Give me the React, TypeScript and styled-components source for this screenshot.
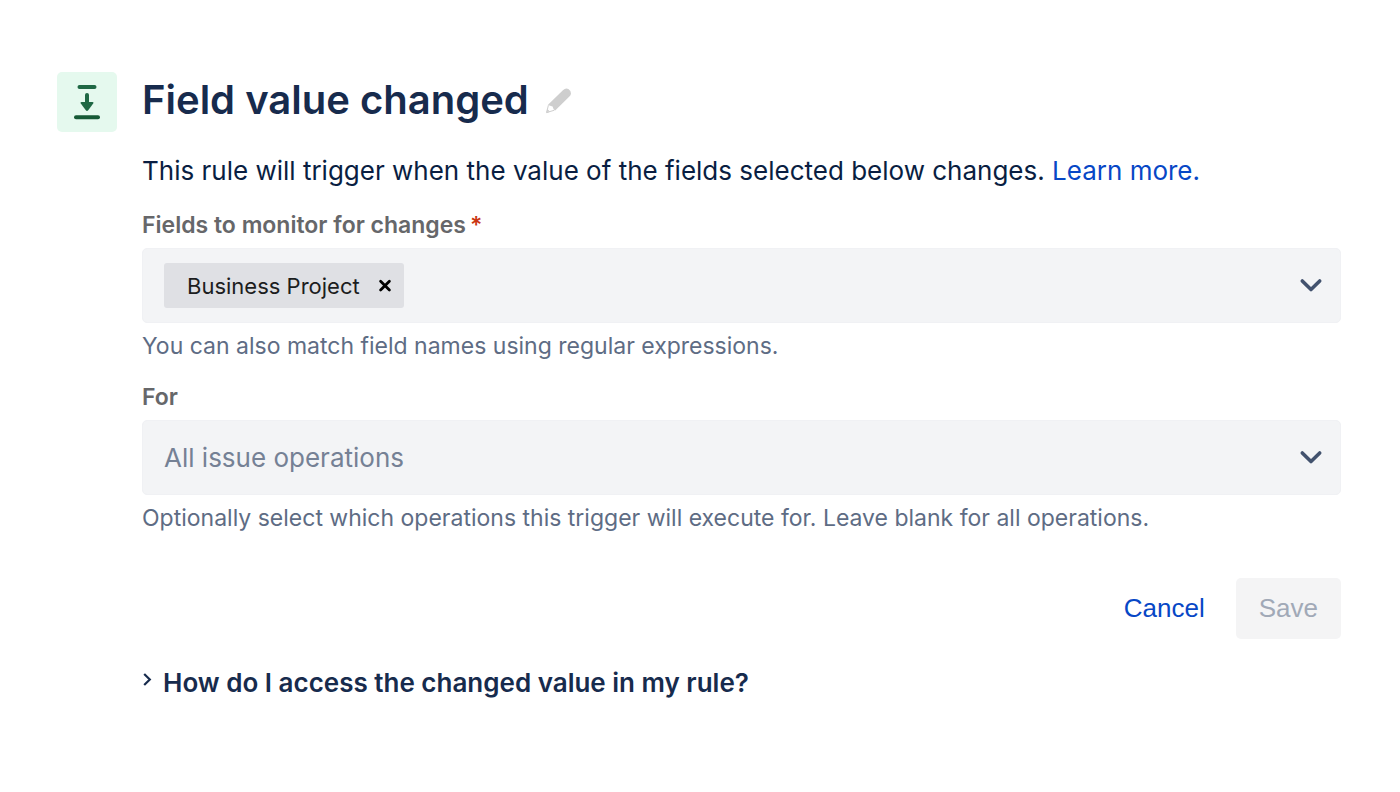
import React, { useState } from "react";
import styled, { createGlobalStyle } from "styled-components";

const GlobalStyle = createGlobalStyle`
  *, *::before, *::after { box-sizing: border-box; }
  body {
    margin: 0;
    background: #ffffff;
    color: #172b4d;
    font-family: Inter, "Liberation Sans", sans-serif;
  }
  button, input, select { font: inherit; }
`;

const Page = styled.main`
  display: flex;
  align-items: flex-start;
  gap: 25px;
  padding: 72px 59px 72px 57px;
`;

const TriggerBadge = styled.div`
  display: flex;
  flex: none;
  width: 60px;
  height: 60px;
  border-radius: 5px;
  background: #e5f9ee;
`;

const Content = styled.div`
  flex: 1;
  min-width: 0;
`;

const Header = styled.header`
  display: flex;
  align-items: center;
  gap: 15px;
  margin-bottom: 27px;
`;

const Title = styled.h1`
  margin: 0;
  font-size: 40px;
  line-height: 56px;
  font-weight: 600;
`;

const IconButton = styled.button`
  display: flex;
  align-items: center;
  justify-content: center;
  padding: 0;
  border: 0;
  background: none;
  cursor: pointer;
`;

const Intro = styled.p`
  margin: 0 0 24px;
  color: #091e42;
  font-size: 26px;
  line-height: 32px;
`;

const Link = styled.a`
  color: #0747c6;
  text-decoration: none;
`;

const Form = styled.form`
  display: flex;
  flex-direction: column;
  gap: 23px;
`;

const Field = styled.div`
  display: flex;
  flex-direction: column;
  gap: 9px;
`;

const Label = styled.label`
  color: #66676a;
  font-size: 23px;
  line-height: 28px;
  font-weight: 600;
`;

const Required = styled.span`
  margin-left: 4px;
  color: #ca3511;
`;

const Control = styled.div`
  display: flex;
  align-items: center;
  height: 75px;
  padding: 0 16px 0 21px;
  border: 1px solid #f0f1f4;
  border-radius: 5px;
  background: #f3f4f6;
`;

const Tag = styled.span`
  display: flex;
  flex: none;
  align-items: center;
  gap: 18px;
  height: 45px;
  padding: 0 12px 0 23px;
  border-radius: 3px;
  background: #dfe0e4;
  color: #1c1d20;
  font-size: 22px;
  line-height: 28px;
`;

const FieldInput = styled.input`
  flex: 1;
  min-width: 0;
  height: 45px;
  border: 0;
  outline: 0;
  background: none;
  font-size: 22px;
`;

const SelectControl = styled.div`
  display: grid;
  align-items: center;
  grid-template-columns: 1fr auto;
  height: 75px;
  padding-right: 16px;
  border: 1px solid #f0f1f4;
  border-radius: 5px;
  background: #f3f4f6;
`;

const Select = styled.select`
  grid-area: 1 / 1 / 2 / 3;
  width: 100%;
  height: 73px;
  padding: 0 0 0 21px;
  border: 0;
  outline: 0;
  appearance: none;
  background: none;
  color: #758195;
  font-size: 26px;
`;

const ArrowSlot = styled.span`
  display: flex;
  grid-area: 1 / 2 / 2 / 3;
  pointer-events: none;
`;

const Help = styled.p`
  margin: 0;
  color: #5e6c84;
  font-size: 23px;
  line-height: 28px;
`;

const Actions = styled.div`
  display: flex;
  justify-content: flex-end;
  gap: 8px;
  margin-top: 23px;
`;

const Button = styled.button<{ $filled?: boolean }>`
  height: 61px;
  padding: 0 23px;
  border: 0;
  border-radius: 5px;
  background: ${(p) => (p.$filled ? "#f4f4f5" : "transparent")};
  color: ${(p) => (p.$filled ? "#a1a9b7" : "#0747c6")};
  font-family: "Liberation Sans", Arial, sans-serif;
  font-size: 26px;
`;

const Faq = styled.details`
  margin-top: 28px;
`;

const Question = styled.summary`
  display: flex;
  align-items: center;
  gap: 10px;
  list-style: none;
  font-size: 26px;
  line-height: 32px;
  font-weight: 600;
  cursor: pointer;
`;

const Answer = styled.p`
  margin: 12px 0 0 20px;
  font-size: 23px;
  line-height: 28px;
`;

const TriggerIcon = () => (
  <svg width="60" height="60" viewBox="0 0 60 60" aria-hidden="true">
    <g fill="none" stroke="#1f6844" strokeLinecap="round" strokeWidth="4">
      <path d="M22.5 15H37.5" />
      <path d="M19 45.3H41" stroke="#165a36" />
      <path d="M30 23V31" />
    </g>
    <path d="M24.5 30H35.5Q37.3 30 36.2 31.5L31.2 38.2Q30 39.6 28.8 38.2L23.8 31.5Q22.7 30 24.5 30Z" fill="#1f6844" />
  </svg>
);

const PencilIcon = () => (
  <svg width="28" height="30" viewBox="0 0 28 30" aria-hidden="true">
    <path
      d="M4 19.8L18.9 5.2Q21.6 2.4 24.4 3.9Q27.1 5.7 27 8.4Q26.8 10.2 25.4 11.6L11.2 25.5L9.6 24.2L8.6 21.6L5.4 20.6Z"
      fill="#cecece"
    />
    <path d="M4.4 20.2L2.6 27.6L10.4 25.2M2.8 27.4L3.6 24.8L5.4 26.6Z" fill="none" stroke="#cecece" />
  </svg>
);

const ChevronDown = () => (
  <svg width="26" height="26" viewBox="0 0 26 26" aria-hidden="true">
    <path
      d="M4.3 8L13 16.5L21.7 8"
      fill="none"
      stroke="#42526e"
      strokeWidth="3.6"
      strokeLinecap="round"
      strokeLinejoin="round"
    />
  </svg>
);

const CloseIcon = () => (
  <svg width="14" height="14" viewBox="0 0 14 14" aria-hidden="true">
    <path d="M2.6 2.2L11.4 11M11.4 2.2L2.6 11" stroke="#000" strokeWidth="2.8" strokeLinecap="round" />
  </svg>
);

const ChevronRight = () => (
  <svg width="11" height="22" viewBox="0 0 11 22" aria-hidden="true">
    <path d="M2.2 2L7.8 7.5L2.2 13" fill="none" stroke="#172b4d" strokeWidth="2.2" />
  </svg>
);

export default function App() {
  const [fields, setFields] = useState(["Business Project"]);

  return (
    <Page>
      <GlobalStyle />
      <TriggerBadge>
        <TriggerIcon />
      </TriggerBadge>
      <Content>
        <Header>
          <Title>Field value changed</Title>
          <IconButton type="button" aria-label="Rename">
            <PencilIcon />
          </IconButton>
        </Header>
        <Intro>
          This rule will trigger when the value of the fields selected below changes.{" "}
          <Link href="#learn">Learn more.</Link>
        </Intro>
        <Form onSubmit={(e) => e.preventDefault()}>
          <Field>
            <Label htmlFor="fields">
              Fields to monitor for changes<Required>*</Required>
            </Label>
            <Control>
              {fields.map((name) => (
                <Tag key={name}>
                  {name}
                  <IconButton
                    type="button"
                    aria-label={`Remove ${name}`}
                    onClick={() => setFields(fields.filter((f) => f !== name))}
                  >
                    <CloseIcon />
                  </IconButton>
                </Tag>
              ))}
              <FieldInput id="fields" aria-describedby="fields-help" />
              <IconButton type="button" aria-label="Show fields">
                <ChevronDown />
              </IconButton>
            </Control>
            <Help id="fields-help">You can also match field names using regular expressions.</Help>
          </Field>
          <Field>
            <Label htmlFor="operations">For</Label>
            <SelectControl>
              <Select id="operations" aria-describedby="operations-help">
                <option>All issue operations</option>
              </Select>
              <ArrowSlot>
                <ChevronDown />
              </ArrowSlot>
            </SelectControl>
            <Help id="operations-help">
              Optionally select which operations this trigger will execute for. Leave blank for all operations.
            </Help>
          </Field>
          <Actions>
            <Button type="button">Cancel</Button>
            <Button type="submit" $filled disabled>
              Save
            </Button>
          </Actions>
        </Form>
        <Faq>
          <Question>
            <ChevronRight />
            How do I access the changed value in my rule?
          </Question>
          <Answer>Use the changelog smart value.</Answer>
        </Faq>
      </Content>
    </Page>
  );
}
